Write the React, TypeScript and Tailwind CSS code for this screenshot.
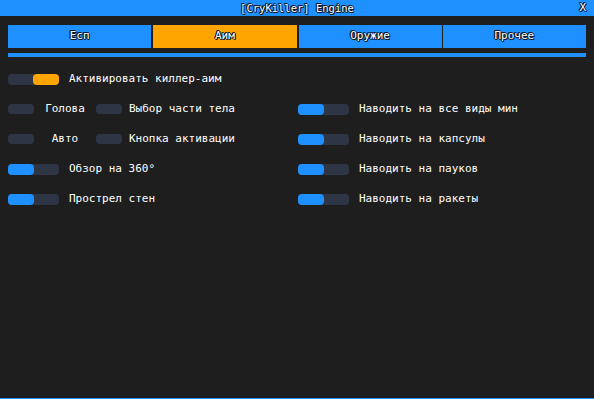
import React from "react";

// ─── data ────────────────────────────────────────────────
const tabs = ["Есп", "Аим", "Оружие", "Прочее"];
const activeTab = 1;

const rightRows = [
  "Наводить на все виды мин",
  "Наводить на капсулы",
  "Наводить на пауков",
  "Наводить на ракеты",
];

const outline =
  "[text-shadow:1px_0_0_#0b1a2e,-1px_0_0_#0b1a2e,0_1px_0_#0b1a2e,0_-1px_0_#0b1a2e,1px_1px_0_#0b1a2e,-1px_-1px_0_#0b1a2e]";

// ─── toggles ─────────────────────────────────────────────
function Toggle({ color = "blue" }: { color?: "blue" | "orange" }) {
  return (
    <div
      className={`w-[51px] h-[11px] rounded-[4px] bg-[#2e3646] flex shrink-0 ${
        color === "orange" ? "justify-end" : "justify-start"
      }`}
    >
      <div
        className={`w-[26px] h-[11px] rounded-[4px] ${
          color === "orange" ? "bg-[#ffa500]" : "bg-[#1e90ff]"
        }`}
      />
    </div>
  );
}

function SmallToggle() {
  return <div className="w-[26px] h-[10px] rounded-[4px] bg-[#2e3646] shrink-0" />;
}

function Row({ children }: { children: React.ReactNode }) {
  return <div className="h-[30px] flex items-center">{children}</div>;
}

export default function App() {
  return (
    <div
      className="w-[594px] h-[399px] bg-[#1e1e1e] flex flex-col border-b border-[#1e90ff] text-white overflow-hidden"
      style={{ fontFamily: '"DejaVu Sans Mono", "Liberation Mono", monospace' }}
    >
      {/* title bar */}
      <div className="h-[16px] bg-[#1e90ff] relative flex items-center justify-center shrink-0">
        <span className={`text-[10.5px] leading-none ${outline}`}>[CryKiller] Engine</span>
        <span className={`absolute right-[8px] top-[2px] text-[11px] leading-none ${outline}`}>X</span>
      </div>

      {/* tabs */}
      <div className="mt-[9px] mx-[8px] flex gap-[1px] h-[23px] shrink-0">
        {tabs.map((t, i) => (
          <div
            key={t}
            className={`flex-1 flex items-center justify-center text-[11px] ${outline} ${
              i === activeTab ? "bg-[#ffa500] mx-[1px]" : "bg-[#1e90ff]"
            }`}
          >
            {t}
          </div>
        ))}
      </div>
      <div className="mt-[5px] mx-[8px] h-[4px] bg-[#1e90ff] shrink-0" />

      {/* content */}
      <div className="mt-[7px] px-[8px] text-[11px]">
        <Row>
          <Toggle color="orange" />
          <span className="ml-[10px]">Активировать киллер-аим</span>
        </Row>
        <div className="grid grid-cols-[290px_1fr]">
          <div>
            <Row>
              <SmallToggle />
              <span className="w-[62px] text-center">Голова</span>
              <SmallToggle />
              <span className="ml-[7px]">Выбор части тела</span>
            </Row>
            <Row>
              <SmallToggle />
              <span className="w-[62px] text-center">Авто</span>
              <SmallToggle />
              <span className="ml-[7px]">Кнопка активации</span>
            </Row>
            <Row>
              <Toggle />
              <span className="ml-[10px]">Обзор на 360°</span>
            </Row>
            <Row>
              <Toggle />
              <span className="ml-[10px]">Прострел стен</span>
            </Row>
          </div>
          <div>
            {rightRows.map((r) => (
              <Row key={r}>
                <Toggle />
                <span className="ml-[10px]">{r}</span>
              </Row>
            ))}
          </div>
        </div>
      </div>
    </div>
  );
}
